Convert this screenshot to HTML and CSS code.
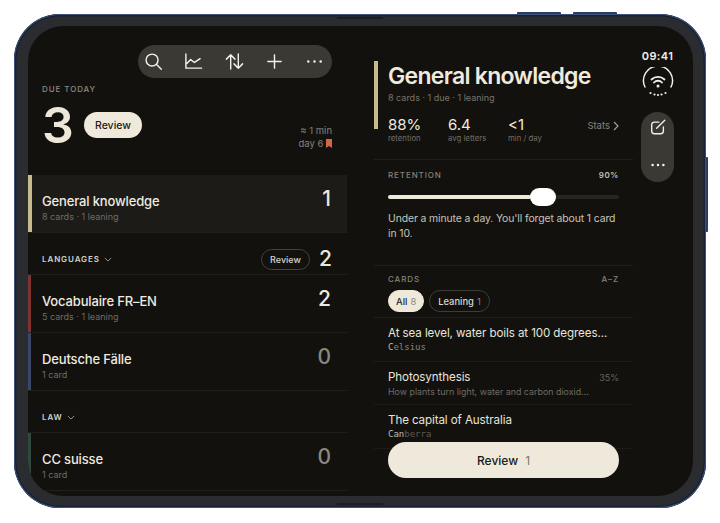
FILE: index.html
```html
<!DOCTYPE html>
<html lang="en">
<head>
<meta charset="utf-8">
<title>Decks</title>
<link rel="stylesheet" href="styles.css">
</head>
<body>
<div class="device">
  <i class="btn btn-top-a"></i><i class="btn btn-top-b"></i><i class="btn btn-side"></i>
  <i class="hinge hinge-top"></i><i class="hinge hinge-bottom"></i>
  <div class="screen">
    <section class="left">
      <div class="toolbar">
        <svg class="ic" viewBox="0 0 20 20"><circle cx="8.500" cy="8.500" r="6.300"/><path d="M13.200 13.200l5 5"/></svg>
        <svg class="ic" viewBox="0 0 20 20"><path d="M2 2v15h16.500M3 12l4-4 4 3 6-4"/></svg>
        <svg class="ic" viewBox="0 0 20 20"><path d="M6 18V3M1.500 7.500L6 3l4.500 4.500M14 2v15M9.500 12.500L14 17l4.500-4.500"/></svg>
        <svg class="ic" viewBox="0 0 20 20"><path d="M10 3v14M3 10h14"/></svg>
        <svg class="ic" viewBox="0 0 20 20"><circle class="dot" cx="3.500" cy="10" r="1.300"/><circle class="dot" cx="10" cy="10" r="1.300"/><circle class="dot" cx="16.500" cy="10" r="1.300"/></svg>
      </div>
      <div class="due-label">DUE TODAY</div>
      <div class="due">
        <span class="due-num">3</span>
        <span class="pill-light">Review</span>
        <div class="due-meta">
          <div>≈ 1 min</div>
          <div>day 6 <svg class="mark" viewBox="0 0 6 9"><path d="M0 0h6v9L3 7 0 9z"/></svg></div>
        </div>
      </div>
      <div class="row row-active tan">
        <div class="row-text"><div class="row-title">General knowledge</div><div class="row-sub">8 cards · 1 leaning</div></div>
        <div class="count">1</div>
      </div>
      <div class="group">
        <span class="group-name">LANGUAGES</span>
        <svg class="chev" viewBox="0 0 10 6"><path d="M1 1l4 4 4-4"/></svg>
        <span class="pill-dark">Review</span>
        <span class="group-count">2</span>
      </div>
      <div class="row red">
        <div class="row-text"><div class="row-title">Vocabulaire FR–EN</div><div class="row-sub">5 cards · 1 leaning</div></div>
        <div class="count">2</div>
      </div>
      <div class="row blue">
        <div class="row-text"><div class="row-title">Deutsche Fälle</div><div class="row-sub">1 card</div></div>
        <div class="count zero">0</div>
      </div>
      <div class="group">
        <span class="group-name">LAW</span>
        <svg class="chev" viewBox="0 0 10 6"><path d="M1 1l4 4 4-4"/></svg>
      </div>
      <div class="row green">
        <div class="row-text"><div class="row-title">CC suisse</div><div class="row-sub">1 card</div></div>
        <div class="count zero">0</div>
      </div>
    </section>

    <section class="detail">
      <div class="head">
        <h1>General knowledge</h1>
        <div class="head-sub">8 cards · 1 due · 1 leaning</div>
        <div class="stats">
          <div class="stat"><div class="stat-v">88%</div><div class="stat-l">retention</div></div>
          <div class="stat"><div class="stat-v">6.4</div><div class="stat-l">avg letters</div></div>
          <div class="stat"><div class="stat-v">&lt;1</div><div class="stat-l">min / day</div></div>
          <div class="stats-link">Stats <svg class="chev-r" viewBox="0 0 6 10"><path d="M1 1l4 4-4 4"/></svg></div>
        </div>
      </div>
      <div class="block retention">
        <div class="line"><span class="caps">RETENTION</span><span class="caps strong">90%</span></div>
        <div class="slider"><div class="slider-fill"></div><div class="slider-thumb"></div></div>
        <p class="note">Under a minute a day. You'll forget about 1 card in 10.</p>
      </div>
      <div class="block cards-head">
        <div class="line"><span class="caps">CARDS</span><span class="caps">A–Z</span></div>
        <div class="chips">
          <span class="chip chip-on">All <em>8</em></span>
          <span class="chip">Leaning <em>1</em></span>
        </div>
      </div>
      <div class="card">
        <div class="card-title">At sea level, water boils at 100 degrees...</div>
        <div class="card-mono">C<span class="fade">elsius</span></div>
      </div>
      <div class="card">
        <div class="line"><div class="card-title">Photosynthesis</div><span class="pct">35%</span></div>
        <div class="card-sub">How plants turn light, water and carbon dioxid...</div>
      </div>
      <div class="card">
        <div class="card-title">The capital of Australia</div>
        <div class="card-mono">Can<span class="fade more">berra</span></div>
      </div>
      <div class="review-main">Review <em>1</em></div>
    </section>

    <aside class="rail">
      <div class="time">09:41</div>
      <svg class="status" viewBox="0 0 32 32">
        <path class="arc" d="M3 20A14.500 14.500 0 1 1 29 20"/>
        <path class="wifi" d="M9.500 12.500a9.500 9.500 0 0 1 13 0M12 15.500a5.500 5.500 0 0 1 8 0"/>
        <circle class="wifi-dot" cx="16" cy="19" r="1.500"/>
        <circle class="wifi-dot" cx="8.500" cy="26" r="1.100"/><circle class="wifi-dot" cx="12.500" cy="27.500" r="1.100"/><circle class="wifi-dot" cx="16" cy="28" r="1.100"/><circle class="wifi-dot" cx="19.500" cy="27.500" r="1.100"/><circle class="wifi-dot" cx="23.500" cy="26" r="1.100"/>
      </svg>
      <div class="rail-pill">
        <svg class="ic rail-ic" viewBox="0 0 20 20"><path d="M16 10v4.500a3 3 0 0 1-3 3H6a3 3 0 0 1-3-3v-7a3 3 0 0 1 3-3h5M8.500 11.500L17.500 2.500"/></svg>
        <svg class="ic rail-ic" viewBox="0 0 20 20"><circle class="dot" cx="4" cy="10" r="1.400"/><circle class="dot" cx="10" cy="10" r="1.400"/><circle class="dot" cx="16" cy="10" r="1.400"/></svg>
      </div>
    </aside>
  </div>
</div>
</body>
</html>
```
FILE: styles.css
```css
* { box-sizing: border-box; }
html, body { margin: 0; height: 100%; background: #fff; overflow: hidden; }
body { padding: 14px 14px 15px 14px; font-family: Inter, "Liberation Sans", sans-serif; color: #f0ece0; }

.device {
  position: relative;
  width: 692px;
  height: 494px;
  border-radius: 46px;
  background: #2a2c2f;
  padding: 12px 13px 12px 14px;
  box-shadow: inset 0 0 0 1px #3f5279, inset 0 0 0 2.500px #18233a;
}
.btn { position: absolute; background: #2b3d63; display: block; }
.btn-top-a { left: 503px; top: -2px; width: 44px; height: 2px; border-radius: 1px 1px 0 0; }
.btn-top-b { left: 559px; top: -2px; width: 44px; height: 2px; border-radius: 1px 1px 0 0; }
.btn-side { right: -2px; top: 143px; width: 2px; height: 75px; border-radius: 0 1px 1px 0; }
.hinge { position: absolute; left: 323px; width: 46px; height: 2px; background: #1c1e21; display: block; }
.hinge-top { top: 3px; }
.hinge-bottom { bottom: 3px; }

.screen {
  display: flex;
  width: 665px;
  height: 470px;
  border-radius: 35px;
  background: #12110e;
  overflow: hidden;
}

/* left list */
.left { width: 319px; flex: none; padding-top: 19px; display: flex; flex-direction: column; }
.toolbar {
  align-self: flex-end;
  width: 194px;
  height: 33px;
  margin-right: 15px;
  border-radius: 17px;
  background: #3a3933;
  display: flex;
  align-items: center;
  justify-content: space-between;
  padding: 0 8px 0 6px;
}
.ic { width: 19px; height: 19px; fill: none; stroke: #f4f1e8; stroke-width: 1.500; stroke-linecap: round; stroke-linejoin: round; }
.ic .dot { fill: #f4f1e8; stroke: none; }

.due-label { margin: 5px 0 0 14px; font-size: 8px; letter-spacing: .9px; color: #8d8a80; font-weight: 500; line-height: 12px; }
.due { display: flex; align-items: center; height: 52px; padding-left: 14px; margin: 4px 15px 24px 0; }
.due-num { font-size: 50px; line-height: 52px; font-weight: 600; color: #ece7d8; width: 42px; }
.pill-light { background: #eee9db; color: #1a1915; font-size: 10.500px; font-weight: 500; height: 26px; width: 58px; border-radius: 13px; display: flex; align-items: center; justify-content: center; }
.due-meta { margin-left: auto; margin-top: 23px; text-align: right; font-size: 9.500px; line-height: 13px; color: #85827a; }
.mark { width: 6px; height: 9px; fill: #d0654a; vertical-align: -1px; }

.row {
  height: 58px;
  padding: 12px 16px 0 14px;
  display: flex;
  justify-content: space-between;
  align-items: flex-start;
  border-bottom: 1px solid #211f1b;
  box-shadow: inset 3px 0 0 var(--bar);
}
.row-active { background: #1c1b17; box-shadow: inset 4px 0 0 var(--bar); }
.tan { --bar: #c8bc8e; }
.red { --bar: #7d3330; }
.blue { --bar: #3a4768; }
.green { --bar: #2f4a3c; }
.row-text { padding-top: 6px; }
.row-title { font-size: 13px; line-height: 17px; font-weight: 500; letter-spacing: -.15px; color: #eeeae0; }
.row-sub { font-size: 9px; line-height: 13px; color: #6f6c64; }
.count { font-size: 21px; line-height: 24px; font-weight: 500; color: #ece8dc; }
.zero { color: #8a877e; }

.group { height: 42px; padding: 11px 15px 0 14px; display: flex; align-items: center; border-bottom: 1px solid #211f1b; }
.group-name { font-size: 8px; letter-spacing: .9px; font-weight: 600; color: #d5d1c6; }
.chev { width: 8px; height: 5px; margin-left: 4px; fill: none; stroke: #a5a298; stroke-width: 1.100; }
.pill-dark { margin-left: auto; height: 21px; width: 49px; border: 1px solid #45433c; border-radius: 11px; display: flex; align-items: center; justify-content: center; font-size: 9px; font-weight: 500; color: #d8d4c9; }
.group-count { font-size: 21px; font-weight: 500; color: #ece8dc; margin-left: 9px; line-height: 24px; }

/* detail pane */
.detail { position: relative; width: 259px; flex: none; margin-left: 27px; overflow: hidden; }
.head { margin-top: 35px; height: 68px; padding-left: 14px; box-shadow: inset 4px 0 0 #c8bc8e; }
h1 { margin: 0; font-size: 23px; line-height: 30px; font-weight: 600; letter-spacing: -.7px; color: #efeadd; }
.head-sub { font-size: 9px; line-height: 13px; color: #77746b; }
.stats { display: flex; margin-top: 12px; width: 231px; align-items: flex-start; }
.stat { width: 60px; }
.stat-v { font-size: 15px; line-height: 17px; font-weight: 400; color: #efeadd; }
.stat-l { font-size: 7.800px; line-height: 10px; color: #716e66; }
.stats-link { margin-left: auto; margin-top: 4px; font-size: 9.500px; color: #86837a; display: flex; align-items: center; gap: 3px; }
.chev-r { width: 6px; height: 10px; fill: none; stroke: #a5a298; stroke-width: 1.100; }

.block { padding: 0 14px; border-bottom: 1px solid #211f1b; }
.retention { margin-top: 30px; height: 107px; border-top: 1px solid #211f1b; padding-top: 10px; }
.line { display: flex; justify-content: space-between; align-items: baseline; }
.caps { font-size: 8px; line-height: 11px; letter-spacing: .9px; color: #85827a; font-weight: 500; }
.strong { color: #c4c0b5; font-weight: 600; letter-spacing: .6px; }
.slider { position: relative; height: 4px; margin-top: 14px; border-radius: 2px; background: #26251f; }
.slider-fill { width: 62%; height: 100%; border-radius: 2px; background: #eee9db; }
.slider-thumb { position: absolute; left: 142px; top: -7px; width: 26px; height: 18px; border-radius: 9px; background: #fff; }
.note { margin: 13px 0 0; font-size: 10.400px; line-height: 14.500px; letter-spacing: -.1px; color: #c8c4b9; }

.cards-head { height: 52px; padding-top: 8px; }
.chips { display: flex; gap: 5px; margin-top: 5px; }
.chip { height: 22px; padding: 0 8px; border-radius: 11px; border: 1px solid #3e3c36; display: flex; align-items: center; gap: 2px; font-size: 9.400px; font-weight: 500; color: #dcd8cd; }
.chip em { font-style: normal; font-weight: 400; color: #8a877e; margin-left: 1px; }
.chip-on { padding: 0 7px; background: #eee9db; border-color: #eee9db; color: #26251f; }

.card { height: 43.500px; padding: 8px 14px 0; border-bottom: 1px solid #1c1b17; }
.card-title { font-size: 11.600px; line-height: 15px; font-weight: 400; letter-spacing: -.1px; color: #e8e4d9; white-space: nowrap; }
.card-mono { font-family: "DejaVu Sans Mono", "Liberation Mono", monospace; font-size: 9px; line-height: 13px; color: #c0bcb0; }
.card-mono .fade { color: #8a877e; }
.card-mono .more { color: #5c5952; }
.card-sub { font-size: 8.900px; line-height: 13px; color: #6f6c64; white-space: nowrap; }
.pct { font-size: 9px; color: #66635c; }

.review-main {
  position: absolute;
  left: 14px;
  bottom: 18px;
  width: 231px;
  height: 36px;
  border-radius: 18px;
  background: #eee9db;
  color: #1a1915;
  font-size: 12px;
  font-weight: 500;
  display: flex;
  align-items: center;
  justify-content: center;
  gap: 7px;
}
.review-main em { font-style: normal; font-weight: 400; color: #7a776e; }

/* status rail */
.rail { flex: 1; display: flex; flex-direction: column; align-items: center; padding: 23px 11px 0 0; }
.time { font-size: 11px; line-height: 14px; font-weight: 600; letter-spacing: .4px; color: #f2efe6; }
.status { width: 32px; height: 32px; margin-top: 4px; fill: none; }
.arc, .wifi { fill: none; stroke: #f2efe6; stroke-width: 1.500; stroke-linecap: round; }
.wifi { stroke-width: 1.800; }
.wifi-dot { fill: #f2efe6; }
.rail-pill { margin-top: 13px; width: 33px; height: 70px; border-radius: 17px; background: #3a3933; display: flex; flex-direction: column; align-items: center; justify-content: space-between; padding: 6px 0 8px; }
.rail-ic { width: 18px; height: 18px; }
```
